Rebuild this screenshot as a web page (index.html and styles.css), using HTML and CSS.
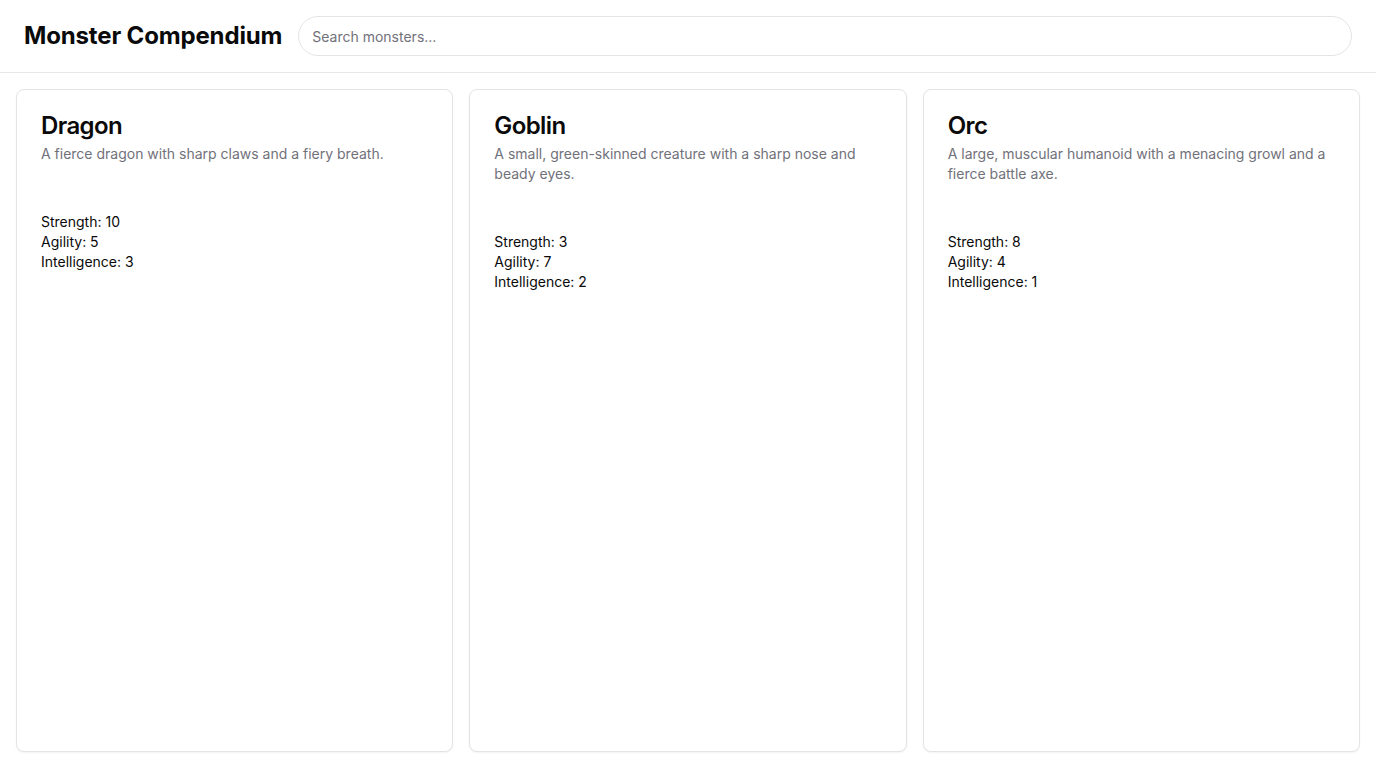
FILE: index.html
```html
<!DOCTYPE html>
<html lang="en">
<head>
<meta charset="utf-8">
<title>Monster Compendium</title>
<link rel="stylesheet" href="styles.css">
</head>
<body>
<div class="app">
  <header class="topbar">
    <h1 class="brand">Monster Compendium</h1>
    <input class="search" type="text" placeholder="Search monsters...">
  </header>
  <main class="content">
    <div class="grid">
      <article class="card">
        <div class="card-header">
          <h2 class="card-title">Dragon</h2>
          <p class="card-desc">A fierce dragon with sharp claws and a fiery breath.</p>
        </div>
        <div class="card-body">
          <p>Strength: 10</p>
          <p>Agility: 5</p>
          <p>Intelligence: 3</p>
        </div>
      </article>
      <article class="card">
        <div class="card-header">
          <h2 class="card-title">Goblin</h2>
          <p class="card-desc">A small, green-skinned creature with a sharp nose and beady eyes.</p>
        </div>
        <div class="card-body">
          <p>Strength: 3</p>
          <p>Agility: 7</p>
          <p>Intelligence: 2</p>
        </div>
      </article>
      <article class="card">
        <div class="card-header">
          <h2 class="card-title">Orc</h2>
          <p class="card-desc">A large, muscular humanoid with a menacing growl and a fierce battle axe.</p>
        </div>
        <div class="card-body">
          <p>Strength: 8</p>
          <p>Agility: 4</p>
          <p>Intelligence: 1</p>
        </div>
      </article>
    </div>
  </main>
</div>
</body>
</html>
```

FILE: styles.css
```css
* { box-sizing: border-box; }
html, body { margin: 0; padding: 0; height: 100%; }
body {
  font-family: Inter, "Noto Sans", sans-serif;
  color: #0a0a0a;
  background: #ffffff;
}
.app {
  display: flex;
  flex-direction: column;
  height: 100vh;
}
.topbar {
  display: flex;
  align-items: center;
  gap: 16px;
  padding: 16px 24px;
  border-bottom: 1px solid #e5e7eb;
}
.brand {
  margin: 0;
  font-size: 24px;
  line-height: 32px;
  font-weight: 700;
  letter-spacing: -0.15px;
  white-space: nowrap;
}
.search {
  flex: 1;
  height: 40px;
  border: 1px solid #e4e4e7;
  border-radius: 9999px;
  padding: 0 13px;
  font-family: inherit;
  font-size: 14px;
  color: #0a0a0a;
  background: #fff;
  outline: none;
}
.search::placeholder { color: #71717a; }
.content {
  flex: 1;
  padding: 16px;
  min-height: 0;
}
.grid {
  display: grid;
  grid-template-columns: repeat(3, 1fr);
  gap: 16px;
  height: 100%;
}
.card {
  border: 1px solid #e4e4e7;
  border-radius: 8px;
  background: #fff;
  box-shadow: 0 1px 2px rgba(0,0,0,0.05);
}
.card-header {
  padding: 24px;
  display: flex;
  flex-direction: column;
  gap: 6px;
}
.card-title {
  margin: 0;
  font-size: 24px;
  line-height: 24px;
  font-weight: 600;
  letter-spacing: -0.6px;
}
.card-desc {
  margin: 0;
  font-size: 14px;
  line-height: 20px;
  color: #71717a;
}
.card-body {
  padding: 24px;
  font-size: 14px;
  line-height: 20px;
}
.card-body p { margin: 0; }
```
